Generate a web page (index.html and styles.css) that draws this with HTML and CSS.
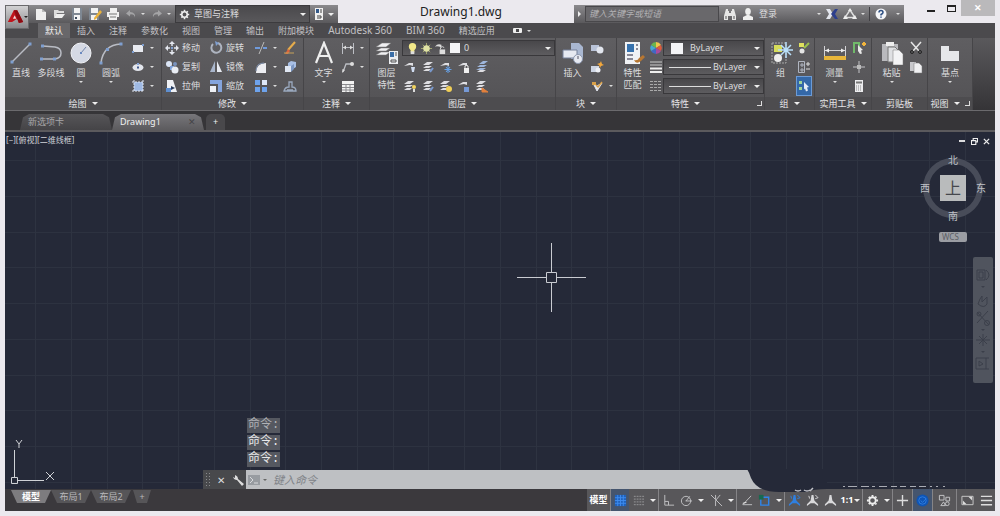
FILE: index.html
```html
<!DOCTYPE html>
<html lang="zh-CN">
<head>
<meta charset="utf-8">
<title>Drawing1.dwg</title>
<link rel="stylesheet" href="styles.css">
</head>
<body>
<svg class="defs" aria-hidden="true">
  <symbol id="new" viewBox="0 0 14 14"><path d="M2 2h6v3h4v8H2z" fill="#eee"/><path d="M8 2l4 3H8z" fill="#bbb"/></symbol>
  <symbol id="open" viewBox="0 0 14 14"><path d="M2 11V3h4l1 1h5v2H5z" fill="#ddd"/><path d="M4 7h9l-3 4H2z" fill="#eee"/></symbol>
  <symbol id="save" viewBox="0 0 14 14"><path d="M2 1h10v12H2z" fill="#7e8792"/><path d="M4 1h6v5H4zM4 8h6v5H4z" fill="#f2f2f2"/><path d="M5 10h2v2H5z" fill="#3c4a5c"/></symbol>
  <symbol id="saveas" viewBox="0 0 14 14"><path d="M1 1h10v12H1z" fill="#7e8792"/><path d="M3 1h7v5H3zM3 8h6v5H3z" fill="#f2f2f2"/><path d="M12 3l2 2-6 7-2 1v-2z" fill="#e9b23c"/></symbol>
  <symbol id="print" viewBox="0 0 14 14"><path d="M4 1h7v4H4zM1 5h12v5H1zM3 9h8v4H3z" fill="#f0f0f0"/><path d="M3 7h8M4 10h6" stroke="#777"/></symbol>
  <symbol id="undo" viewBox="0 0 14 14"><path d="M6 3L2 6.500l4 3V7.500q4-1 5 3 1-5-5-5.500z" fill="#a4a4a6"/></symbol>
  <symbol id="redo" viewBox="0 0 14 14"><path d="M8 3l4 3.500-4 3V7.500q-4-1-5 3-1-5 5-5.500z" fill="#a4a4a6"/></symbol>
  <symbol id="gear" viewBox="0 0 14 14"><circle cx="7" cy="7" r="3.500" fill="none" stroke="#eee" stroke-width="2"/><path d="M7 1v2M7 11v2M1 7h2M11 7h2M3 3l1.200 1.200M10 10l1.200 1.200M3 11l1.200-1.200M10 4l1.200-1.200" stroke="#eee" stroke-width="2"/></symbol>
  <symbol id="sheet" viewBox="0 0 14 14"><path d="M3 1h8v12H3z" fill="#f0f0f0"/><path d="M4 2h3v4H4z" fill="#345a8a"/><path d="M5 9h4v2H5M8 3h2M8 5h2" stroke="#444" fill="none"/></symbol>
  <symbol id="binoc" viewBox="0 0 14 14"><path d="M3 2h2v2h1v2h2V4h1V2h2l2 7v4H9V9H5v4H1V9z" fill="#e6e6e6"/><path d="M3 9v3M11 9v3" stroke="#555"/></symbol>
  <symbol id="user" viewBox="0 0 14 14"><ellipse cx="7" cy="4.500" rx="2.800" ry="3.500" fill="#eee"/><path d="M2 13V10l4-2h2l4 2v3z" fill="#eee"/></symbol>
  <symbol id="exch" viewBox="0 0 14 14"><path d="M1 2h4l3 5-3 5H1l3-5z" fill="#e3e6ee"/><path d="M13 2H10L6 7l4 5h3l-3-5z" fill="#2d3f8d"/></symbol>
  <symbol id="a360" viewBox="0 0 14 14"><path d="M7 3l5 7.500H2z" fill="none" stroke="#ddd" stroke-width="1.500"/><path d="M7 1l2 3H5zM0 12l2-4 3 4zM14 12l-2-4-3 4z" fill="#eee"/></symbol>
  <symbol id="help" viewBox="0 0 14 14"><circle cx="7" cy="7" r="5.500" fill="#f4f5f8"/><path d="M5 5.500q0-2 2-2t2 2q0 1-2 2v1M7 9.500v1.300" fill="none" stroke="#2d4f83" stroke-width="1.500"/></symbol>
  <symbol id="line" viewBox="0 0 24 24"><path d="M3 21L21 3" stroke="#b9bcc4" stroke-width="1.500"/><path d="M1.500 19.500h3v3h-3zM19.500 1.500h3v3h-3z" fill="#7f9fd0"/></symbol>
  <symbol id="pline" viewBox="0 0 24 24"><path d="M2 18h14q6-1 6-6 0-5-6-6l-12-1" fill="none" stroke="#b9bcc4" stroke-width="1.500"/><path d="M1 16.500h3v3H1zM2 3.500h3v3H2zM14 16.500h3v3h-3z" fill="#7f9fd0"/></symbol>
  <symbol id="circle" viewBox="0 0 24 24"><circle cx="12" cy="12" r="10" fill="#d5d9e4" stroke="#f1f2f6"/><path d="M12 12l5-6" stroke="#7286ac"/><path d="M11 11h2v2h-2z" fill="#6b8ac0"/></symbol>
  <symbol id="arc" viewBox="0 0 24 24"><path d="M2 22Q4 4 22 3" fill="none" stroke="#b9bcc4" stroke-width="1.500"/><path d="M.500 20.500h3v3h-3zM7 7h3v3H7zM20.500 1.500h3v3h-3z" fill="#7f9fd0"/></symbol>
  <symbol id="rect" viewBox="0 0 14 14"><path d="M2 4h10v7H2z" fill="#e8eaf0"/><path d="M1 10h2v2H1zM11 3h2v2h-2z" fill="#7f9fd0"/></symbol>
  <symbol id="ellipse" viewBox="0 0 14 14"><ellipse cx="7" cy="7.500" rx="5.500" ry="3.500" fill="#e2e5ec"/><path d="M6 6.500h2v2H6z" fill="#42598a"/><path d="M6 3h2v2H6z" fill="#88a6d8"/></symbol>
  <symbol id="hatch" viewBox="0 0 14 14"><path d="M3 3h9v9H3z" fill="#9fb9e3"/><path d="M3 1v12M12 1v12M1 3h12M1 12h12" stroke="#dfe5f0" stroke-dasharray="2 1"/></symbol>
  <symbol id="move" viewBox="0 0 14 14"><path d="M7 1v4M7 9v4M1 7h4M9 7h4" stroke="#e4e7ef" stroke-width="1.500"/><path d="M7 0l3 3H4zM7 14l3-3H4zM0 7l3-3v6zM14 7l-3-3v6z" fill="#e4e7ef"/><circle cx="7" cy="7" r="1.200" fill="#7f9fd0"/></symbol>
  <symbol id="rotate" viewBox="0 0 14 14"><path d="M4 3a5 5 0 1 0 5-1" fill="none" stroke="#aeb4c0" stroke-width="2"/><path d="M6 0l4 2-3 3z" fill="#7f9fd0"/></symbol>
  <symbol id="copy" viewBox="0 0 14 14"><circle cx="4" cy="4" r="3" fill="#dbe5f6"/><circle cx="10" cy="4" r="2" fill="#7892bd"/><path d="M5 6h4v4H5z" fill="#7fa3dc"/><circle cx="10" cy="10" r="3.500" fill="#e9edf4"/></symbol>
  <symbol id="mirror" viewBox="0 0 14 14"><path d="M6 1v11H1z" fill="#a9b6cc"/><path d="M8 1v11h5z" fill="#e8ebf2"/></symbol>
  <symbol id="stretch" viewBox="0 0 14 14"><path d="M2 1h6l4 12H2z" fill="#eef0f5"/><path d="M1 9h5v4H1z" fill="#5f8fd0"/><path d="M6 7l4 2-4 2z" fill="#263a5c"/></symbol>
  <symbol id="scale" viewBox="0 0 14 14"><path d="M1 1h12v12H9V5H1z" fill="#84a4dd"/><path d="M1 7h6v6H1z" fill="#eef0f5"/></symbol>
  <symbol id="trim" viewBox="0 0 14 14"><path d="M1 7h5M9 7h4" stroke="#6f9adb" stroke-width="2"/><path d="M10 1L5 13" stroke="#bbb"/></symbol>
  <symbol id="fillet" viewBox="0 0 14 14"><path d="M2 13Q2 3 12 3v10z" fill="#edeef2"/><path d="M2 11Q2 3 10 3" stroke="#8091ae" fill="none"/></symbol>
  <symbol id="array" viewBox="0 0 14 14"><path d="M1 1h5v5H1zM8 8h5v5H8zM1 8h5v5H1z" fill="#6ea3ec"/><path d="M8 1h5v5H8z" fill="#dfe8f7"/></symbol>
  <symbol id="erase" viewBox="0 0 14 14"><path d="M12 1L5 9" stroke="#e5ac4c" stroke-width="2"/><path d="M5 8l2 2-2 3H2z" fill="#d9653e"/><path d="M1 12h10" stroke="#c7a25b"/></symbol>
  <symbol id="explode" viewBox="0 0 14 14"><path d="M5 3l3-2 5 1v5l-3 2H5z" fill="#a8bfe5"/><path d="M2 6h6v6H2z" fill="#e0e7f3"/><path d="M8 6l3-2v5l-3 3z" fill="#7c97c3"/></symbol>
  <symbol id="offset" viewBox="0 0 14 14"><path d="M1 12h12q0-4-4-4V3H6v5q-4 0-5 4zM4 11h6" stroke="#9aa9bf" fill="none" stroke-width="1.300"/></symbol>
  <symbol id="text" viewBox="0 0 24 24"><path d="M4 22L12 2l8 20M7 15h10" fill="none" stroke="#eee" stroke-width="2.200"/></symbol>
  <symbol id="dim" viewBox="0 0 14 14"><path d="M1.500 2v11M12.500 2v11M2 6.500h10" stroke="#bcbec4"/><path d="M2 6.500l3-2v4zM12 6.500l-3-2v4z" fill="#ddd"/></symbol>
  <symbol id="leader" viewBox="0 0 14 14"><path d="M2 12L5 4h5" stroke="#bcbec4" fill="none" stroke-width="1.300"/><circle cx="11" cy="4" r="2" fill="#ddd"/><path d="M1 13l.500-4 2.500 1z" fill="#ddd"/></symbol>
  <symbol id="table" viewBox="0 0 14 14"><path d="M1 2h12v11H1z" fill="#f2f2f2"/><path d="M1 5.500h12M1 8.500h12M1 11h12M5 5v8M9 5v8" stroke="#8a8a8e"/></symbol>
  <symbol id="layerprop" viewBox="0 0 24 24"><path d="M1 6l6-4h9l-5 4zM1 10l5-3h9l-4 3zM1 14l5-3h9l-4 3z" fill="#f0f0f2" stroke="#777" stroke-width=".500"/><path d="M14 10h9v13h-9z" fill="#eceef2"/><path d="M15 11h4v5h-4z" fill="#3a6ea8"/><path d="M20 12h2M20 14h2M16 19h5v2h-5z" stroke="#555" fill="none"/></symbol>
  <symbol id="bulb" viewBox="0 0 14 14"><path d="M7 1q4 0 4 4 0 2-2 4v2H5V9Q3 7 3 5q0-4 4-4z" fill="#f3e98a"/><path d="M5 10h4v3H5z" fill="#ddd"/></symbol>
  <symbol id="sun" viewBox="0 0 14 14"><path d="M7 1v12M1 7h12M3 3l8 8M3 11l8-8" stroke="#a5aa70"/><circle cx="7" cy="7" r="3.500" fill="#dfe2a4"/></symbol>
  <symbol id="unlock" viewBox="0 0 14 14"><path d="M1 5q3-4 7-2v3q-4-2-7-1z" fill="#ddd"/><path d="M6 8h6v5H6z" fill="#ddd"/><path d="M7 8V6q2-2 4 0" stroke="#ddd" fill="none"/></symbol>
  <symbol id="lyA" viewBox="0 0 14 14"><path d="M1 6l5-3h4v3l-3-1z" fill="#dedee2"/><path d="M8 7h4l-1 5H9z" fill="#d0dcf0"/></symbol>
  <symbol id="lyB" viewBox="0 0 14 14"><path d="M2 5l4-3h6l-4 3zM2 8l3-2h6l-3 2zM2 11l3-2h5l-2 2z" fill="#dedee2"/><path d="M9 12l3-4" stroke="#7a9bd0" stroke-width="2"/></symbol>
  <symbol id="lyC" viewBox="0 0 14 14"><path d="M1 6l5-3h4v3l-3-1z" fill="#dedee2"/><path d="M9 6v7M5.500 9.500h7M7 7l4 5M11 7l-4 5" stroke="#67a2e8"/></symbol>
  <symbol id="lyD" viewBox="0 0 14 14"><path d="M1 6l5-3h4v3l-3-1z" fill="#dedee2"/><path d="M7 8h5v5H7z" fill="#f0f0f0"/><path d="M8 8V6q1.500-1.500 3 0v2" fill="none" stroke="#eee"/></symbol>
  <symbol id="lyE" viewBox="0 0 14 14"><path d="M4 4l4-3h5l-4 3zM2 7l3-2h7l-3 2zM1 10l4-2h6l-3 2z" fill="#9fb7dc"/><path d="M2 12l3-2h6l-3 2z" fill="#dedee2"/></symbol>
  <symbol id="lyF" viewBox="0 0 14 14"><path d="M1 5l4-3h6L7 5zM1 8l3-2h6L7 8zM1 11l3-2h5l-2 2z" fill="#dedee2"/><circle cx="11" cy="8" r="2" fill="#f3d45f"/><path d="M10 10h2v3h-2z" fill="#ddd"/></symbol>
  <symbol id="lyG" viewBox="0 0 14 14"><path d="M1 5l4-3h6L7 5zM1 8l3-2h6L7 8zM1 11l3-2h5l-2 2z" fill="#dedee2"/><circle cx="10" cy="10" r="3" fill="#f0cf57"/></symbol>
  <symbol id="lyH" viewBox="0 0 14 14"><path d="M1 6l5-3h4v3l-3-1z" fill="#dedee2"/><path d="M7 8h5v5H7z" fill="#7699d6"/></symbol>
  <symbol id="lyI" viewBox="0 0 14 14"><path d="M1 5l4-3h6L7 5zM1 8l3-2h6L7 8zM1 11l3-2h5l-2 2z" fill="#dedee2"/><path d="M7 9l6 4H7z" fill="#e2803c" stroke="#e2803c"/></symbol>
  <symbol id="insert" viewBox="0 0 24 24"><path d="M10 2h8l4 4v12H10z" fill="#a9b7d1"/><path d="M2 9h14v8H2z" fill="#e6e9f1" stroke="#76819a"/><circle cx="17" cy="18" r="4.500" fill="#e6e9f1" stroke="#8b96ae"/><path d="M17 18v-3" stroke="#556"/></symbol>
  <symbol id="blk" viewBox="0 0 14 14"><path d="M1 4h8v6H1z" fill="#b9c3d8"/><circle cx="10" cy="9" r="3.500" fill="#e2e6ee"/></symbol>
  <symbol id="blk2" viewBox="0 0 14 14"><path d="M1 6h8v6H1z" fill="#cdd5e4"/><circle cx="8" cy="10" r="2.500" fill="#eef0f5"/><path d="M11 1l1 3 2 1-3 1-1 2-1-3-2-1 3-1z" fill="#f3a83c"/></symbol>
  <symbol id="blk3" viewBox="0 0 14 14"><path d="M3 4l4 8 5-8-5 3z" fill="#e3e6ee" stroke="#e3e6ee"/><path d="M2 3h4v3H2z" fill="#d9a14a"/><path d="M6 6l2 2 4-5" stroke="#d9a14a" stroke-width="1.500" fill="none"/></symbol>
  <symbol id="match" viewBox="0 0 24 24"><path d="M4 1h15v22H4z" fill="#f0f2f5"/><path d="M6 3h7v8H6z" fill="#3672ae"/><path d="M15 4h2M15 8h2M6 14h6M6 18h6" stroke="#667" stroke-width="1.500"/><path d="M22 14l2 2-4 4q-5 4-7-1 4 1 5-2z" fill="#b77732"/></symbol>
  <symbol id="wheel" viewBox="0 0 14 14"><path d="M7 7L7 1a6 6 0 0 1 5 3z" fill="#f0c64b"/><path d="M7 7l5-3a6 6 0 0 1 0 6z" fill="#dd5a3c"/><path d="M7 7l5 3a6 6 0 0 1-5 3z" fill="#a84c9d"/><path d="M7 7v6a6 6 0 0 1-5-3z" fill="#4168c4"/><path d="M7 7l-5 3a6 6 0 0 1 0-6z" fill="#46a8d3"/><path d="M7 7L2 4a6 6 0 0 1 5-3z" fill="#6cb54c"/></symbol>
  <symbol id="lw" viewBox="0 0 14 14"><path d="M1 2h12M1 5h12" stroke="#ccc"/><path d="M1 8.500h12M1 12h12" stroke="#eee" stroke-width="2"/></symbol>
  <symbol id="lt" viewBox="0 0 14 14"><path d="M1 2.500h12M1 5.500h12M1 8.500h12M1 11.500h12" stroke="#aaa" stroke-dasharray="3 1"/></symbol>
  <symbol id="group" viewBox="0 0 24 24"><path d="M3 2h14v20H3z" fill="none" stroke="#aaa" stroke-dasharray="2 1"/><path d="M5 4h8v7H5z" fill="#d7dd5b"/><circle cx="9" cy="17" r="4" fill="#eee"/><path d="M17 1v16M9 9h15M12 4l10 10M22 4L12 14" stroke="#b9e0fa" stroke-width="1.500"/></symbol>
  <symbol id="ungroup" viewBox="0 0 14 14"><path d="M2 2h5v4H2z" fill="#dfe05f"/><path d="M7 7l5-5" stroke="#9bc04e" stroke-width="2"/><circle cx="5" cy="10" r="2.500" fill="#e5e5e5"/></symbol>
  <symbol id="gedit" viewBox="0 0 14 14"><path d="M1.500 1.500h6v11h-6zM4 4h2v2H4zM4 9h2v2H4z" stroke="#b0b5c0" fill="none"/><path d="M9 4h4M11 2v4M9 9h4" stroke="#ddd"/></symbol>
  <symbol id="gsel" viewBox="0 0 14 14"><path d="M2 2h3v3H2zM2 8h3v3H2z" fill="#9fd39a"/><path d="M7 3l5 5-2 .500 1 3-2 1-1-3-1 1z" fill="#e4ecf7"/></symbol>
  <symbol id="measure" viewBox="0 0 24 24"><path d="M1.500 5v10M22.500 5v10M2 9.500h20" stroke="#d3d3d6"/><path d="M2 9.500l4-2v4zM22 9.500l-4-2v4z" fill="#eee"/><path d="M1 15h22v4H1z" fill="#e8b63b"/></symbol>
  <symbol id="quick" viewBox="0 0 14 14"><path d="M2 12V2h5v4" fill="none" stroke="#71b96a" stroke-width="2"/><path d="M6 4l5 5-2 .500 1 3-2 .500-2-3z" fill="#e8e8e8"/><path d="M12 1v4M10 3h4" stroke="#f1b43d" stroke-width="2"/></symbol>
  <symbol id="point" viewBox="0 0 14 14"><path d="M7 1v12M1 7h12" stroke="#c4c4c8"/><path d="M5 5h4v4H5z" fill="#bbb"/></symbol>
  <symbol id="calc" viewBox="0 0 14 14"><path d="M3 1h8v12H3z" fill="#ececee"/><path d="M4 3.500h6" stroke="#777" stroke-width="2"/><path d="M4 7h6M4 9h6M4 11h6" stroke="#888" stroke-dasharray="1 1"/></symbol>
  <symbol id="paste" viewBox="0 0 24 24"><path d="M2 3h16v17H2z" fill="#b9b9bd"/><path d="M6 1h8v4H6z" fill="#eee"/><path d="M8 6h7l3 3v12H8z" fill="#dfe0e3" stroke="#777"/><path d="M13 9h6l4 4v11H13z" fill="#f3f3f5" stroke="#777" stroke-width=".500"/></symbol>
  <symbol id="cut" viewBox="0 0 14 14"><path d="M2 1l8 9M12 1l-8 9" stroke="#e6e6e6" stroke-width="1.500"/><circle cx="3" cy="11" r="1.500" stroke="#222" fill="none"/><circle cx="11" cy="11" r="1.500" stroke="#222" fill="none"/></symbol>
  <symbol id="pages" viewBox="0 0 14 14"><path d="M1 2h6v9H1z" fill="#c8c8cc"/><path d="M5 3h5l3 3v7H5z" fill="#f0f0f2" stroke="#777" stroke-width=".500"/></symbol>
  <symbol id="base" viewBox="0 0 24 24"><path d="M3 5h8v5h10v10H3z" fill="#e6e7ea"/></symbol>
  <symbol id="wrench" viewBox="0 0 14 14"><path d="M2 4q1 3 4 3l5 6 2-2-6-5q0-3-3-4v3z" fill="#ddd"/></symbol>
  <symbol id="prompt" viewBox="0 0 14 14"><path d="M1 2h12v10H1z" fill="#989ca1"/><path d="M3 4l3 3-3 3M7 10h4" stroke="#d8dadd" fill="none"/></symbol>
  <symbol id="gridon" viewBox="0 0 14 14"><path d="M1 1h12v12H1z" fill="#1f62bd"/><path d="M4 1v12M7 1v12M10 1v12M1 4h12M1 7h12M1 10h12" stroke="#3f8df0"/></symbol>
  <symbol id="snap" viewBox="0 0 14 14"><path d="M2 2.500h11M2 5.500h11M2 8.500h11M2 11.500h11" stroke="#98989b" stroke-dasharray="2 1"/></symbol>
  <symbol id="ortho" viewBox="0 0 14 14"><path d="M3 1v11h10M3 8h4v4" fill="none" stroke="#c4c4c6"/></symbol>
  <symbol id="polar" viewBox="0 0 14 14"><circle cx="6.500" cy="7.500" r="5" fill="none" stroke="#c4c4c6"/><path d="M6 7.500h7M6.500 7.500l4-5" stroke="#c4c4c6"/></symbol>
  <symbol id="iso" viewBox="0 0 14 14"><path d="M6 1v5l7 7M11 1L6 7v6M1 1l5 5" fill="none" stroke="#c4c4c6"/></symbol>
  <symbol id="track" viewBox="0 0 14 14"><path d="M12 2L3 11.500h10" fill="none" stroke="#c4c4c6"/><path d="M3 10l4-1" stroke="#eee"/></symbol>
  <symbol id="osnap" viewBox="0 0 14 14"><path d="M3 3.500h8.500v8.500H3z" fill="none" stroke="#2f85ea" stroke-width="1.500"/><path d="M1 1h5v5H1z" fill="#176a4f"/></symbol>
  <symbol id="man" viewBox="0 0 14 14"><path d="M6 1h2l1 6 4 4v2l-4-3H5l-4 3v-2l4-4z" fill="currentColor"/></symbol>
  <symbol id="man2" viewBox="0 0 14 14"><path d="M6 1h2l1 6 4 4v2l-4-3H5l-4 3v-2l4-4z" fill="currentColor"/><path d="M10 1l3 3-3 1M3 2l1 3" stroke="currentColor" fill="none"/></symbol>
  <symbol id="plus" viewBox="0 0 14 14"><path d="M7 1v12M1 7h12" stroke="#ddd" stroke-width="1.500"/></symbol>
  <symbol id="hw" viewBox="0 0 14 14"><circle cx="7" cy="7" r="6.500" fill="#0e55b6"/><circle cx="7" cy="7" r="4" fill="none" stroke="#2f7ce0"/><path d="M5 7l2 2 4-4" stroke="#2f7ce0" fill="none"/></symbol>
  <symbol id="isolate" viewBox="0 0 14 14"><path d="M1.500 1.500h5v5h-5zM8.500 3.500h4v4h-4zM3 12.500h5l-2-4z" fill="none" stroke="#c8c8ca"/><circle cx="10" cy="10.500" r="2" fill="none" stroke="#c8c8ca"/></symbol>
  <symbol id="clean" viewBox="0 0 14 14"><path d="M1 2.500h12v9H1z" fill="none" stroke="#ccc"/><path d="M8 3h4v4zM2 11V7l4 4z" fill="#ddd"/></symbol>
  <symbol id="menu" viewBox="0 0 14 14"><path d="M1 2.500h12M1 7h12M1 11.500h12" stroke="#ddd" stroke-width="1.500"/></symbol>
</svg>

<div class="app">
  <header class="header">
    <button class="appmenu" aria-label="应用程序菜单"><svg viewBox="0 0 20 22"><path d="M1 17L8 3h4l7 14-5 1-2-5-6 4z" fill="#c0141c"/><path d="M8 3h4l7 14-5 1z" fill="#8c0b12"/><path d="M9 9l2 4H7z" fill="#f0d9d9"/></svg><i class="dot"></i></button>
    <div class="titlebar">
      <div class="quick">
        <button aria-label="新建"><svg><use href="#new"/></svg></button><button aria-label="打开"><svg><use href="#open"/></svg></button><button aria-label="保存"><svg><use href="#save"/></svg></button><button aria-label="另存为"><svg><use href="#saveas"/></svg></button><button aria-label="打印"><svg><use href="#print"/></svg></button><button aria-label="放弃"><svg><use href="#undo"/></svg></button><i class="dot"></i><button aria-label="重做"><svg><use href="#redo"/></svg></button><i class="dot"></i>
        <div class="workspace"><svg><use href="#gear"/></svg><select aria-label="工作空间"><option>草图与注释</option></select><i class="caret"></i></div>
        <button aria-label="图纸"><svg><use href="#sheet"/></svg></button><i class="caret"></i>
      </div>
      <h1 class="title">Drawing1.dwg</h1>
      <div class="info">
        <i class="play"></i><input class="search" type="text" aria-label="搜索" placeholder="键入关键字或短语">
        <button aria-label="查找"><svg><use href="#binoc"/></svg></button><button class="login"><svg><use href="#user"/></svg>登录</button><i class="dot"></i>
        <button aria-label="Exchange"><svg><use href="#exch"/></svg></button><button aria-label="连接"><svg><use href="#a360"/></svg></button><i class="dot"></i>
        <button class="help" aria-label="帮助"><svg><use href="#help"/></svg></button><i class="dot"></i>
      </div>
      <div class="winbtns"><button aria-label="最小化"><i class="min"></i></button><button aria-label="最大化"><i class="max"></i></button><button class="close" aria-label="关闭">✕</button></div>
    </div>
    <nav class="tabs">
      <a href="#" class="on">默认</a><a href="#">插入</a><a href="#">注释</a><a href="#">参数化</a><a href="#">视图</a><a href="#">管理</a><a href="#">输出</a><a href="#">附加模块</a><a href="#">Autodesk 360</a><a href="#">BIM 360</a><a href="#">精选应用</a>
      <button class="mini" aria-label="最小化功能区"><i class="pill"></i><i class="dot"></i></button>
    </nav>
  </header>

  <main class="ribbon">
    <section class="panel draw"><div class="body">
      <button class="big"><svg><use href="#line"/></svg>直线</button><button class="big"><svg><use href="#pline"/></svg>多段线</button><button class="big"><svg><use href="#circle"/></svg>圆<i class="dot"></i></button><button class="big"><svg><use href="#arc"/></svg>圆弧<i class="dot"></i></button>
      <div class="col"><button aria-label="矩形"><svg><use href="#rect"/></svg><i class="dot"></i></button><button aria-label="椭圆"><svg><use href="#ellipse"/></svg><i class="dot"></i></button><button aria-label="图案填充"><svg><use href="#hatch"/></svg><i class="dot"></i></button></div>
    </div><h2>绘图<i class="caret"></i></h2></section>
    <section class="panel"><div class="body modify">
      <div class="col wide"><button><svg><use href="#move"/></svg>移动</button><button><svg><use href="#copy"/></svg>复制</button><button><svg><use href="#stretch"/></svg>拉伸</button></div>
      <div class="col wide"><button><svg><use href="#rotate"/></svg>旋转</button><button><svg><use href="#mirror"/></svg>镜像</button><button><svg><use href="#scale"/></svg>缩放</button></div>
      <div class="col"><button aria-label="修剪"><svg><use href="#trim"/></svg><i class="dot"></i></button><button aria-label="圆角"><svg><use href="#fillet"/></svg><i class="dot"></i></button><button aria-label="阵列"><svg><use href="#array"/></svg><i class="dot"></i></button></div>
      <div class="col"><button aria-label="删除"><svg><use href="#erase"/></svg></button><button aria-label="分解"><svg><use href="#explode"/></svg></button><button aria-label="偏移"><svg><use href="#offset"/></svg></button></div>
    </div><h2>修改<i class="caret"></i></h2></section>
    <section class="panel"><div class="body inset">
      <button class="big"><svg><use href="#text"/></svg>文字<i class="dot"></i></button>
      <div class="col"><button aria-label="线性标注"><svg><use href="#dim"/></svg><i class="dot"></i></button><button aria-label="引线"><svg><use href="#leader"/></svg><i class="dot"></i></button><button aria-label="表格"><svg><use href="#table"/></svg></button></div>
    </div><h2>注释<i class="caret"></i></h2></section>
    <section class="panel"><div class="body">
      <button class="big"><svg><use href="#layerprop"/></svg>图层<br>特性</button>
      <div class="layers">
        <div class="combo"><svg><use href="#bulb"/></svg><svg><use href="#sun"/></svg><svg><use href="#unlock"/></svg><i class="swatch"></i><select aria-label="图层"><option>0</option></select><i class="caret"></i></div>
        <div class="tools"><button aria-label="关"><svg><use href="#lyA"/></svg></button><button aria-label="隔离"><svg><use href="#lyB"/></svg></button><button aria-label="冻结"><svg><use href="#lyC"/></svg></button><button aria-label="锁定"><svg><use href="#lyD"/></svg></button><button aria-label="置为当前"><svg><use href="#lyE"/></svg></button></div>
        <div class="tools"><button aria-label="打开所有图层"><svg><use href="#lyF"/></svg></button><button aria-label="取消隔离"><svg><use href="#lyB"/></svg></button><button aria-label="解冻"><svg><use href="#lyG"/></svg></button><button aria-label="解锁"><svg><use href="#lyH"/></svg></button><button aria-label="匹配图层"><svg><use href="#lyI"/></svg></button></div>
      </div>
    </div><h2>图层<i class="caret"></i></h2></section>
    <section class="panel"><div class="body">
      <button class="big"><svg><use href="#insert"/></svg>插入</button>
      <div class="col"><button aria-label="创建"><svg><use href="#blk"/></svg></button><button aria-label="编辑"><svg><use href="#blk2"/></svg></button><button aria-label="编辑属性"><svg><use href="#blk3"/></svg><i class="dot"></i></button></div>
    </div><h2>块<i class="caret"></i></h2></section>
    <section class="panel tight"><div class="body props">
      <button class="big"><svg><use href="#match"/></svg>特性<br>匹配</button>
      <div class="col"><button aria-label="对象颜色"><svg><use href="#wheel"/></svg></button><button aria-label="线宽"><svg><use href="#lw"/></svg></button><button aria-label="线型"><svg><use href="#lt"/></svg></button></div>
      <div class="combos">
        <div class="combo"><i class="swatch"></i><select aria-label="颜色"><option>ByLayer</option></select><i class="caret"></i></div>
        <div class="combo"><i class="rule"></i><select aria-label="线宽"><option>ByLayer</option></select><i class="caret"></i></div>
        <div class="combo"><i class="rule"></i><select aria-label="线型"><option>ByLayer</option></select><i class="caret"></i></div>
      </div>
    </div><h2>特性<i class="caret"></i><i class="launch"></i></h2></section>
    <section class="panel tight"><div class="body">
      <button class="big"><svg><use href="#group"/></svg>组</button>
      <div class="col"><button aria-label="解除编组"><svg><use href="#ungroup"/></svg></button><button aria-label="组编辑"><svg><use href="#gedit"/></svg></button><button class="sel" aria-label="组选择"><svg><use href="#gsel"/></svg></button></div>
    </div><h2>组<i class="caret"></i></h2></section>
    <section class="panel"><div class="body inset">
      <button class="big"><svg><use href="#measure"/></svg>测量<i class="dot"></i></button>
      <div class="col"><button aria-label="快速选择"><svg><use href="#quick"/></svg></button><button aria-label="点样式"><svg><use href="#point"/></svg></button><button aria-label="计算器"><svg><use href="#calc"/></svg></button></div>
    </div><h2>实用工具<i class="caret"></i></h2></section>
    <section class="panel"><div class="body inset">
      <button class="big"><svg><use href="#paste"/></svg>粘贴<i class="dot"></i></button>
      <div class="col"><button aria-label="剪切"><svg><use href="#cut"/></svg></button><button aria-label="复制"><svg><use href="#pages"/></svg></button></div>
    </div><h2>剪贴板</h2></section>
    <section class="panel"><div class="body center">
      <button class="big"><svg><use href="#base"/></svg>基点<i class="dot"></i></button>
    </div><h2>视图<i class="caret"></i><i class="launch"></i></h2></section>
    <div class="rest"></div>
  </main>

  <nav class="files"><a href="#">新选项卡</a><a href="#" class="on">Drawing1<span>✕</span></a><button aria-label="新建图形">+</button></nav>

  <section class="canvas" aria-label="绘图区">
    <div class="viewlabel">[−][俯视][二维线框]</div>
    <div class="doc"><button aria-label="最小化"><i class="min"></i></button><button aria-label="还原"><svg viewBox="0 0 8 8"><path d="M2.500 2.500v-2h5v4h-2M.500 3h5v4.500h-5z" fill="none" stroke="#eee" stroke-width="1.300"/></svg></button><button aria-label="关闭"><svg viewBox="0 0 8 8"><path d="M1 1l6 6M7 1L1 7" stroke="#eee" stroke-width="1.500"/></svg></button></div>
    <div class="viewcube">
      <svg viewBox="0 0 70 70"><circle cx="35" cy="35" r="27" fill="none" stroke="#484c59" stroke-width="6"/><path d="M22 22h26v26H22z" fill="#b9bbbc"/><g fill="#bfc1c7" font-size="10" text-anchor="middle"><text x="35" y="11">北</text><text x="35" y="67">南</text><text x="7" y="39">西</text><text x="63" y="39">东</text><text x="35" y="41" font-size="16" fill="#45474c">上</text></g></svg>
      <button class="wcs">WCS</button>
    </div>
    <div class="navbar"><svg viewBox="0 0 20 126"><g fill="none" stroke="#3b3f4a"><path d="M4 13h8v10H4zM6 15h4v6H6zM13 13q6 5 0 10"/><path d="M5 47q2-6 4-8v6l5-5v7q-3 5-9 0zM4 55l12 13M15 54L4 66"/><circle cx="14" cy="66" r="2.500"/><circle cx="6" cy="57" r="2"/><path d="M10 77v12M3 83h14M6 79l8 8M14 79l-8 8"/><path d="M3 101h10v11H3zM6 104v5l4-2zM13 101h3M13 112h3"/></g><path d="M8 29h4l-2 2zM8 72h4l-2 2zM8 94h4l-2 2z" fill="#3b3f4a"/></svg></div>
    <svg class="cross" viewBox="0 0 70 70"><path d="M34.500 0v29M34.500 40v29M0 34.500h29M40 34.500h29M29.500 29.500h10v10h-10z" fill="none" stroke="#c9cbd1"/></svg>
    <svg class="ucs" viewBox="0 0 50 50"><path d="M5.500 12v28M8 42.500h27M2.500 39.500h6v6h-6zM7 2l3 4 3-4M10 6v4M37 34l8 8M45 34l-8 8" fill="none" stroke="#d0d2d6"/></svg>
    <div class="history"><p>命令:</p><p>命令:</p><p>命令:</p></div>
    <div class="cmd"><i class="grip"></i><button aria-label="关闭">✕</button><button aria-label="自定义"><svg><use href="#wrench"/></svg></button><label><svg><use href="#prompt"/></svg><i class="dot"></i><input type="text" aria-label="命令行" placeholder="键入命令"></label></div>
    <svg class="patch" viewBox="0 0 200 23"><path d="M0 0h80v20q-14 0-20 3H32q-22 0-28-14Q2 3 0 0z" fill="#252938"/><path d="M48 21q3 2 6 0M57 21q3 2 6 0M66 19l-3 3" fill="none" stroke="#c3c4c9" stroke-width="1.500"/><path d="M96 17.500h2M101 17.500h9M114 17.500h8M125 17.500h3M132 17.500h8M144 17.500h6M153 17.500h6M163 17.500h6M172 17.500h7M183 17.500h2M189 17.500h2M196 17.500h2" stroke="#a9abb3"/></svg>
  </section>

  <footer class="status">
    <nav class="layouts"><a href="#" class="on">模型</a><a href="#">布局1</a><a href="#">布局2</a><button aria-label="新建布局">+</button></nav>
    <div class="bar">
      <button class="w24 strong sep">模型</button><button class="w18 lit" aria-label="栅格"><svg><use href="#gridon"/></svg></button><button class="w18" aria-label="捕捉"><svg><use href="#snap"/></svg></button><button class="w12 sep" aria-label="捕捉选项"><i class="caret"></i></button>
      <button class="w18" aria-label="正交"><svg><use href="#ortho"/></svg></button><button class="w18" aria-label="极轴"><svg><use href="#polar"/></svg></button><button class="w12" aria-label="极轴选项"><i class="caret"></i></button><button class="w18" aria-label="等轴测"><svg><use href="#iso"/></svg></button><button class="w12 sep" aria-label="等轴测选项"><i class="caret"></i></button>
      <button class="w18" aria-label="追踪"><svg><use href="#track"/></svg></button><button class="w18" aria-label="对象捕捉"><svg><use href="#osnap"/></svg></button><button class="w12 sep" aria-label="对象捕捉选项"><i class="caret"></i></button>
      <button class="w18 blue" aria-label="注释可见性"><svg><use href="#man2"/></svg></button><button class="w18" aria-label="自动缩放"><svg><use href="#man2"/></svg></button><button class="w18" aria-label="注释比例"><svg><use href="#man"/></svg></button><button class="w24 strong sep">1:1<i class="caret"></i></button>
      <button class="w18" aria-label="设置"><svg><use href="#gear"/></svg></button><button class="w12 sep" aria-label="工作空间选项"><i class="caret"></i></button><button class="w20 sep" aria-label="监视器"><svg><use href="#plus"/></svg></button><button class="w20 sep lit" aria-label="硬件加速"><svg><use href="#hw"/></svg></button><button class="w24 sep" aria-label="隔离对象"><svg><use href="#isolate"/></svg></button><button class="w20" aria-label="全屏"><svg><use href="#clean"/></svg></button><button class="w18" aria-label="自定义"><svg><use href="#menu"/></svg></button>
    </div>
  </footer>
</div>
</body>
</html>
```
FILE: styles.css
```css
* { box-sizing: border-box; }
body, h1, h2, p { margin: 0; }
body { background: #ebe9ee; color: #dcdcde; font: 9px/12px "Noto Sans", "Noto Sans CJK SC", sans-serif; }
button, input, select { font: inherit; color: inherit; background: none; border: 0; padding: 0; margin: 0; appearance: none; min-width: 0; }
button { display: flex; align-items: center; justify-content: center; white-space: nowrap; }
a { color: inherit; text-decoration: none; }
svg { width: 14px; height: 14px; flex: none; }
i { display: block; flex: none; }
.defs { position: absolute; width: 0; height: 0; }
.caret { width: 0; height: 0; border: 3px solid transparent; border-top-color: #eee; border-bottom: 0; }
.dot { width: 0; height: 0; border: 2px solid transparent; border-top-color: #ddd; border-bottom: 0; }
.min { width: 8px; height: 2px; background: currentColor; }
.max { width: 9px; height: 7px; border: 1px solid #222; border-top-width: 2px; }

.app { min-height: 100vh; padding: 0 5px 5px; display: grid; grid-template-rows: auto auto auto 1fr auto; }

/* header */
.header { display: grid; grid-template-columns: 24px 1fr; grid-template-rows: 23px 15px; background: linear-gradient(#ebe9ee 5px, #4b4a4d 5px); }
.appmenu { grid-row: 1 / 3; align-self: start; height: 24px; margin-top: 5px; background: linear-gradient(#d2d1d3, #8a898c); border: 1px solid #6a696c; }
.appmenu svg { width: 17px; height: 20px; }
.appmenu .dot { border-top-color: #222; }
.titlebar { display: grid; grid-template-columns: 309px 1fr 330px 91px; background: #ebe9ee; }
.quick, .info { margin-top: 5px; display: flex; align-items: center; background: linear-gradient(#8b8a8d, #5a595c); }
.quick { padding: 0 4px 0 3px; }
.quick button { width: 18px; }
.quick > .dot { margin: 0 3px 0 1px; }
.workspace { flex: 1; align-self: stretch; display: flex; align-items: center; gap: 4px; padding: 0 3px; margin-left: 1px; background: linear-gradient(#4a494c, #59585b); border: 1px solid #3c3b3e; }
.workspace svg { width: 11px; height: 11px; }
.workspace select { flex: 1; }
.title { padding: 2px 0 0 10px; font-size: 12px; line-height: 20px; font-weight: 400; text-align: center; color: #222; }
.info { padding: 0 4px; gap: 4px; }
.play { border: 3px solid transparent; border-left-color: #eee; border-right: 0; }
.search { flex: 0 0 134px; align-self: stretch; margin: 1px 0; padding: 0 3px; background: #69686b; border: 1px solid #49484b; }
.search::placeholder { color: #b2b1b4; font-style: italic; opacity: 1; }
.login { flex: 1; justify-content: start; gap: 4px; }
.help { width: 23px; border-left: 1px solid #414044; }
.winbtns { display: flex; align-items: start; color: #222; }
.winbtns button { width: 20px; height: 16px; }
.winbtns button:first-child { margin-left: 17px; padding-top: 6px; }
.winbtns .close { flex: 1; background: #bab9bb; color: #fff; font-weight: 700; }
.tabs { display: flex; padding-left: 9px; color: #c2c1c4; background: #4b4a4d; font-size: 10px; line-height: 15px; }
.tabs a { padding: 0 7px; font-size: 9px; }
.tabs a:nth-child(9), .tabs a:nth-child(10) { font-size: 10px; }
.tabs .on { background: #68676a; color: #f0f0f0; }
.mini { gap: 5px; margin-left: 11px; }
.pill { width: 9px; height: 5px; border: 2px solid #eee; border-width: 1px 3px; border-radius: 1px; }

/* ribbon */
.ribbon { display: grid; grid-template-columns: 157fr 142fr 66fr 186fr 61fr 148fr 50fr 57fr 56fr 45fr 22fr; background: #59585b; border-bottom: 1px solid #6b6a6d; }
.panel { display: grid; grid-template-rows: 59px 13px; border-right: 1px solid #464548; min-width: 0; background: linear-gradient(#5f5e61, #535255); }
.rest { background: linear-gradient(#5a595c, #353437); }
.panel h2 { display: flex; align-items: center; justify-content: center; gap: 5px; font-size: 9px; font-weight: 400; line-height: 13px; background: #4d4c4f; color: #e4e4e6; }
.body { display: flex; min-width: 0; padding-left: 1px; }
.inset { padding-left: 4px; }
.center { justify-content: center; padding: 0; }
.big { flex-direction: column; justify-content: start; width: 31px; flex: none; padding-top: 3px; line-height: 12px; }
.draw .big { width: 30px; }
.tight .big { width: 29px; }
.big svg { width: 24px; height: 24px; margin-bottom: 2px; }
.big .dot { margin-top: 2px; }
.col { display: grid; grid-template-rows: repeat(3, 18px); align-content: start; gap: 1px; padding: 1px 0 0 2px; }
.col button { justify-content: start; gap: 5px; }
.draw .col { padding-left: 5px; }
.modify { gap: 2px; padding-left: 1px; }
.wide { width: 42px; }
.wide button { gap: 3px; }
.modify .col:nth-child(3) { width: 28px; padding-left: 3px; }
.sel { background: #3468a8; outline: 1px solid #6c9bd6; }
.layers { flex: 1; display: grid; grid-template-rows: 18px 18px 18px; gap: 1px; align-content: start; padding-top: 1px; }
.tools { display: flex; gap: 4px; padding-left: 1px; }
.combo { height: 16px; align-self: center; display: flex; align-items: center; gap: 2px; padding: 0 3px; background: linear-gradient(#48474a, #5d5c5f); border: 1px solid #39383b; }
.combo svg { width: 13px; height: 13px; }
.combo select { flex: 1; padding-left: 3px; }
.layers .combo { gap: 1px; }
.layers .swatch { margin-left: 2px; }
.swatch { width: 10px; height: 10px; background: #f4f4f6; }
.combos { flex: 1; display: grid; grid-template-rows: repeat(3, 18px); gap: 1px; align-content: start; padding-top: 1px; }
.combos .swatch { width: 12px; height: 11px; margin: 0 2px 0 4px; }
.combos .rule { width: 42px; height: 1px; margin-left: 2px; background: #ddd; }
.combos .rule + select { padding-left: 0; }
.launch { width: 5px; height: 5px; border: 1px solid #ddd; border-width: 0 1px 1px 0; }
.props + h2 .launch { margin-left: 52px; }
.props + h2 { padding-left: 52px; }

/* file tabs */
.files { display: flex; height: 21px; padding: 3px 0 0 15px; background: #363538; border-bottom: 2px solid #5b5a5d; line-height: 16px; color: #a8a7aa; }
.files a { width: 92px; padding-left: 8px; background: linear-gradient(#565558, #454447); clip-path: polygon(0 100%, 3px 20%, 9px 0, 83px 0, 89px 20%, 100% 100%); }
.files .on { display: flex; justify-content: space-between; padding-right: 8px; background: linear-gradient(#77767a, #5c5b5e); color: #f2f2f2; }
.files .on span { color: #454447; }
.files button { width: 19px; margin-left: 2px; background: #49484b; border-radius: 5px 5px 0 0; color: #eee; }

/* drawing area */
.canvas { position: relative; background-color: #252938; background-image: linear-gradient(90deg, #2e3341 1px, transparent 1px), linear-gradient(90deg, #2e3341 1px, transparent 1px), linear-gradient(90deg, #2e3341 1px, transparent 1px), linear-gradient(90deg, #2e3341 1px, transparent 1px), linear-gradient(#2d3240 1px, transparent 1px), linear-gradient(#2d3240 1px, transparent 1px), linear-gradient(#2d3240 1px, transparent 1px), linear-gradient(#2d3240 1px, transparent 1px); background-size: 143px 143px; background-position: 30px 0, 66px 0, 102px 0, 137px 0, 0 28px, 0 64px, 0 100px, 0 135px; }
.viewlabel { padding: 2px 1px; font-size: 8px; color: #d0d2d8; }
.doc { position: absolute; top: 5px; right: 5px; display: flex; gap: 4px; }
.doc button { width: 8px; height: 8px; }
.doc svg { width: 7px; height: 7px; }
.doc .min { width: 6px; }
.viewcube { position: absolute; right: 7px; top: 21px; width: 70px; display: grid; justify-items: center; gap: 9px; }
.viewcube svg { width: 70px; height: 70px; }
.wcs { width: 28px; height: 10px; font-size: 8px; line-height: 10px; background: #9b9da3; color: #5b5e66; border-radius: 2px; justify-content: start; padding-left: 3px; }
.navbar { position: absolute; right: 2px; top: 125px; width: 20px; height: 126px; background: #50545e; border-radius: 2px; }
.navbar svg { width: 20px; height: 126px; }
.cross { position: absolute; left: 512px; top: 111px; width: 70px; height: 70px; }
.ucs { position: absolute; left: 4px; bottom: 1px; width: 50px; height: 50px; }
.history { position: absolute; left: 242px; bottom: 22px; display: grid; gap: 2px; font: 12px/15px "Liberation Mono", "Noto Sans CJK SC", monospace; }
.history p { background: #555860; padding: 0 1px; color: #e8e8ea; }
.history p:first-child { color: #b0b2b6; }
.cmd { position: absolute; left: 198px; right: 215px; bottom: 0; height: 19px; display: flex; background: #48494c; }
.cmd > button { width: 17px; font-size: 10px; }
.grip { width: 5px; margin: 2px; background: radial-gradient(#8a8b8e 1px, transparent 1px) 0 0 / 3px 3px; }
.cmd label { flex: 1; display: flex; align-items: center; gap: 2px; padding-left: 1px; background: #bec0c3; }
.cmd .dot { border-top-color: #666; }
.cmd input { flex: 1; padding-left: 4px; font-size: 11px; font-style: italic; color: #333; }
.cmd input::placeholder { color: #808388; opacity: 1; }
.patch { position: absolute; right: 48px; bottom: -3px; width: 200px; height: 23px; z-index: 1; }

/* status bar */
.status { display: flex; justify-content: space-between; background: #3b393d; height: 22px; }
.layouts { display: flex; align-items: start; padding: 1px 0 0 6px; color: #b9b8bb; }
.layouts > * { height: 13px; width: 40px; line-height: 13px; text-align: center; background: #565558; clip-path: polygon(0 0, 100% 0, 34px 100%, 6px 100%); }
.layouts .on { background: #7d7c7f; color: #fff; font-weight: 700; }
.layouts button { width: 18px; margin-left: 2px; clip-path: polygon(0 0, 100% 0, 14px 100%, 4px 100%); }
.bar { display: flex; background: #58575a; color: #d8d8da; }
.w12 { width: 12px; }
.w18 { width: 18px; }
.w20 { width: 20px; }
.w24 { width: 24px; }
.sep { border-right: 1px solid #858487; }
.bar svg { width: 13px; height: 13px; }
.strong { font-weight: 700; color: #fff; gap: 1px; }
.lit { background: #45556e; }
.blue { color: #2f7fe0; }
```
